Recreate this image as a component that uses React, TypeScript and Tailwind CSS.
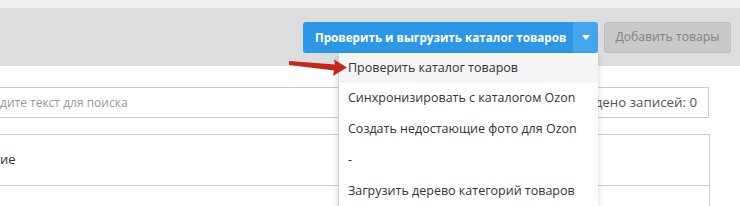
const menuItems = [
  'Проверить каталог товаров',
  'Синхронизировать с каталогом Ozon',
  'Создать недостающие фото для Ozon',
  '-',
  'Загрузить дерево категорий товаров',
];

export default function App() {
  return (
    <div className="relative w-[740px] h-[206px] overflow-hidden bg-white font-['Open_Sans',sans-serif] text-[13px] text-[#333]">
      {/* top strip */}
      <div className="h-[8px] bg-[#eeeeee]" />

      {/* toolbar */}
      <div className="h-[58px] bg-[#dcdddf] flex justify-end items-start pt-[14px] pr-[9px] gap-[6px]">
        <div className="flex h-[31px] rounded-[3px] overflow-hidden">
          <button className="w-[270px] pl-[12px] text-left whitespace-nowrap bg-[#2d97e6] text-white font-bold text-[11.7px]">
            Проверить и выгрузить каталог товаров
          </button>
          <button className="w-[25px] bg-[#44a4ec] flex items-center justify-center">
            <svg width="8" height="5" viewBox="0 0 8 5">
              <path d="M0 0 L8 0 L4 5 Z" fill="#fff" />
            </svg>
          </button>
        </div>
        <button className="w-[127px] h-[31px] rounded-[3px] bg-[#c9c9c9] border border-[#bebebe] text-[#828282] text-[12.2px] whitespace-nowrap">
          Добавить товары
        </button>
      </div>

      {/* search row */}
      <div className="flex mt-[21px] pr-[31px]">
        <div className="flex-1 h-[31px] border border-[#cccccc] border-l-0 flex items-center text-[#999] text-[12px]">
          дите текст для поиска
        </div>
        <div className="h-[31px] border border-[#cccccc] border-l-0 flex items-center pl-[12px] pr-[11px] text-[#555] text-[13.3px]">
          Найдено записей: 0
        </div>
      </div>

      {/* table */}
      <div className="mt-[16px] mr-[30px] border border-l-0 border-[#cccccc]">
        <div className="h-[51px] border-b border-[#cccccc] flex items-center">ие</div>
        <div className="h-[51px]" />
      </div>

      {/* dropdown menu */}
      <div className="absolute left-[338px] top-[53px] w-[260px] bg-white border-l border-[#d8d8d8] shadow-[0_2px_6px_rgba(0,0,0,0.18)]">
        {menuItems.map((item, i) => (
          <div
            key={i}
            className={
              i === 0
                ? 'h-[30px] flex items-center pl-[9px] bg-[#f5f5f5] text-[12.5px]'
                : 'h-[31px] flex items-center pl-[9px] text-[12.5px]'
            }
          >
            {item}
          </div>
        ))}
      </div>

      {/* red arrow */}
      <svg className="absolute left-[286px] top-[56px]" width="64" height="24" viewBox="0 0 64 24">
        <path d="M3 5 L49 8.5 L48 3.5 L61 11.5 L47 20 L48 14.5 L3 9 Z" fill="#c0281a" />
      </svg>
    </div>
  );
}
